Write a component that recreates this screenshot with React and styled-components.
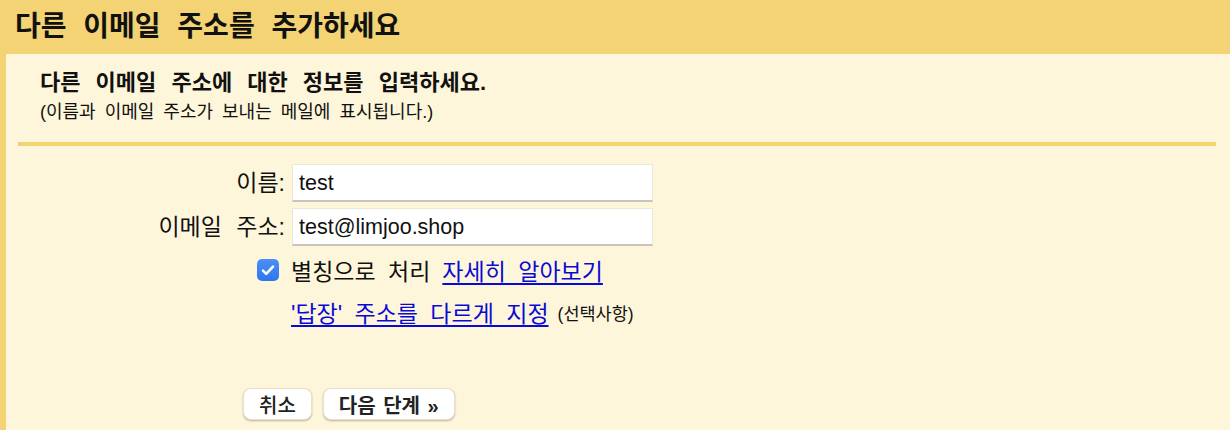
import React from "react";
import styled, { createGlobalStyle } from "styled-components";

const Global = createGlobalStyle`
  html, body { margin: 0; padding: 0; }
  body {
    background: #fef6da;
    font-family: "Liberation Sans", "Noto Sans CJK KR", sans-serif;
    color: #111;
  }
`;

const YELLOW = "#f3d374";

const Page = styled.div`
  width: 1230px;
  min-height: 430px;
  display: flex;
  flex-direction: column;
  background: #fef6da;
`;

const Header = styled.header`
  height: 54px;
  background: ${YELLOW};
  display: flex;
  align-items: center;
  padding-left: 15px;
`;

const Title = styled.h1`
  margin: 0;
  font-size: 28px;
  font-weight: 700;
  word-spacing: 9px;
  color: #111;
  line-height: 1;
`;

const Body = styled.main`
  flex: 1;
  border-left: 6px solid ${YELLOW};
  display: flex;
  flex-direction: column;
`;

const Intro = styled.section`
  padding: 15px 0 0 34px;
`;

const Subheading = styled.h2`
  margin: 0;
  font-size: 22px;
  font-weight: 700;
  line-height: 28px;
  word-spacing: 9px;
`;

const Note = styled.p`
  margin: 3px 0 0;
  font-size: 18px;
  line-height: 24px;
  word-spacing: 4px;
`;

const Rule = styled.hr`
  margin: 18px 14px 0 12px;
  border: 0;
  height: 4px;
  background: ${YELLOW};
`;

const Form = styled.div`
  margin-top: 18px;
  display: grid;
  grid-template-columns: 279px 361px;
  column-gap: 7px;
  row-gap: 6px;
  align-items: center;
`;

const Label = styled.label`
  justify-self: end;
  font-size: 23px;
  word-spacing: 8px;
  line-height: 38px;
  color: #111;
`;

const Input = styled.input`
  box-sizing: border-box;
  height: 38px;
  width: 361px;
  padding: 2px 6px 0;
  background: #fff;
  border: 1px solid #ece8d6;
  border-bottom: 2px solid #c6c4bd;
  font-family: "Liberation Sans", sans-serif;
  font-size: 21.5px;
  color: #111;
  outline: none;
`;

const CheckCell = styled.div`
  justify-self: end;
  margin-right: 6px;
  height: 36px;
  display: flex;
  align-items: center;
`;

const Check = styled.span`
  width: 22px;
  height: 22px;
  border-radius: 5px;
  background: linear-gradient(#4b8ff7, #2f76ef);
  display: flex;
  align-items: center;
  justify-content: center;
`;

const OptionText = styled.div`
  margin-left: -1px;
  height: 36px;
  display: flex;
  align-items: center;
  font-size: 23px;
  word-spacing: 6px;
  white-space: pre;
`;

const Link = styled.a`
  color: #0a0ad6;
  text-decoration: underline;
  text-underline-offset: 3px;
  cursor: pointer;
  margin-left: ${(p) => (p.$gap ? "12px" : "0")};
`;

const Small = styled.span`
  margin-left: 9px;
  font-size: 17.5px;
  word-spacing: 0;
`;

const Actions = styled.div`
  margin: 58px 0 0 237px;
  display: flex;
  gap: 11px;
`;

const Button = styled.button`
  height: 32px;
  padding: 0 15px;
  border: 1px solid #e8e2c8;
  border-radius: 8px;
  background: #fff;
  box-shadow: 0 1px 2px rgba(0, 0, 0, 0.28);
  font-family: "Liberation Sans", "Noto Sans CJK KR", sans-serif;
  font-size: 20px;
  font-weight: ${(p) => (p.$primary ? 700 : 500)};
  word-spacing: 2px;
  color: #222;
  cursor: pointer;
`;

export default function App() {
  return (
    <Page>
      <Global />
      <Header>
        <Title>다른 이메일 주소를 추가하세요</Title>
      </Header>
      <Body>
        <Intro>
          <Subheading>다른 이메일 주소에 대한 정보를 입력하세요.</Subheading>
          <Note>(이름과 이메일 주소가 보내는 메일에 표시됩니다.)</Note>
        </Intro>
        <Rule />
        <Form>
          <Label htmlFor="name">이름:</Label>
          <Input id="name" defaultValue="test" />
          <Label htmlFor="email">이메일 주소:</Label>
          <Input id="email" defaultValue="test@limjoo.shop" />
          <CheckCell>
            <Check>
              <svg width="16" height="16" viewBox="0 0 16 16" fill="none">
                <path
                  d="M3 8.6l3.2 3.2L13 4.6"
                  stroke="#fff"
                  strokeWidth="2.6"
                  strokeLinecap="round"
                  strokeLinejoin="round"
                />
              </svg>
            </Check>
          </CheckCell>
          <OptionText>
            별칭으로 처리
            <Link $gap>자세히 알아보기</Link>
          </OptionText>
          <div />
          <OptionText>
            <Link>'답장' 주소를 다르게 지정</Link>
            <Small>(선택사항)</Small>
          </OptionText>
        </Form>
        <Actions>
          <Button>취소</Button>
          <Button $primary>다음 단계 »</Button>
        </Actions>
      </Body>
    </Page>
  );
}
